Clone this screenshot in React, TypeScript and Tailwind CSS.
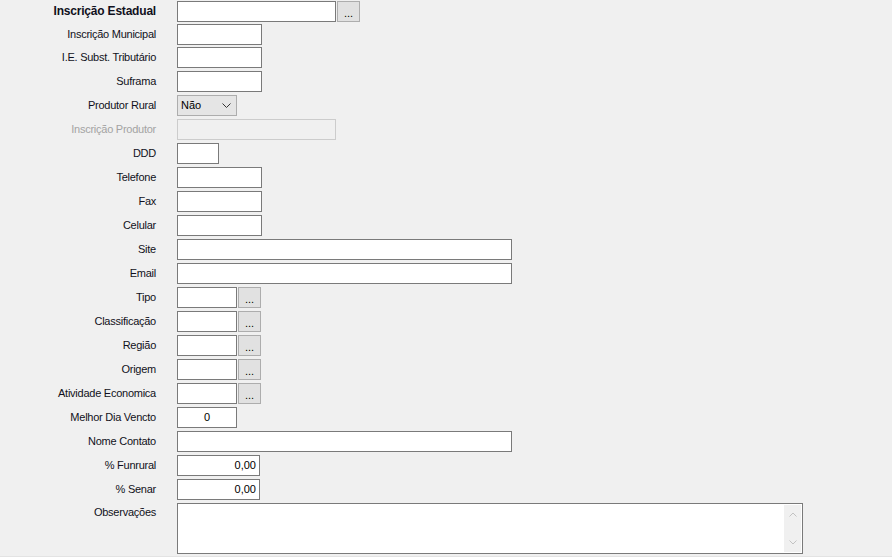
import { ReactNode } from "react";

const font = { fontFamily: '"Liberation Sans", Arial, sans-serif' };

function Label({ children, bold, disabled, top }: { children: ReactNode; bold?: boolean; disabled?: boolean; top?: boolean }) {
  return (
    <div
      className={`w-[156px] shrink-0 text-right leading-[13px] ${bold ? "font-bold text-[12px] tracking-[-0.2px]" : "text-[11px] tracking-[-0.25px]"} ${
        disabled ? "text-[#a3a3a3]" : "text-[#101020]"
      } ${top ? "self-start pt-[3px]" : ""}`}
    >
      {children}
    </div>
  );
}

function Input({ w, value, align = "left", disabled }: { w: string; value?: string; align?: "left" | "right" | "center"; disabled?: boolean }) {
  const al = align === "right" ? "justify-end pr-[3px]" : align === "center" ? "justify-center" : "justify-start pl-[3px]";
  return (
    <div
      className={`${w} h-[21px] flex items-center text-[11px] text-black border ${al} ${
        disabled ? "bg-[#f0f0f0] border-[#cccccc]" : "bg-white border-[#7a7a7a]"
      }`}
    >
      {value}
    </div>
  );
}

function Dots() {
  return (
    <div className="ml-[1px] w-[23px] h-[21px] bg-[#e1e1e1] border border-[#adadad] flex items-end justify-center pb-[3px] text-[11px] leading-[10px] text-black">
      ...
    </div>
  );
}

function Row({ label, h = "h-[24px]", children, bold, disabled }: { label: string; h?: string; children: ReactNode; bold?: boolean; disabled?: boolean }) {
  return (
    <div className={`flex items-start ${h}`}>
      <div className="h-[21px] flex items-center">
        <Label bold={bold} disabled={disabled}>{label}</Label>
      </div>
      <div className="ml-[21px] flex">{children}</div>
    </div>
  );
}

export default function App() {
  const lookups = ["Tipo", "Classificação", "Região", "Origem", "Atividade Economica"];
  return (
    <div className="w-[892px] h-[557px] bg-[#f0f0f0] overflow-hidden flex flex-col" style={font}>
      <div className="pt-[1px] flex flex-col">
        <Row label="Inscrição Estadual" bold h="h-[23px]">
          <Input w="w-[159px]" />
          <Dots />
        </Row>
        <Row label="Inscrição Municipal" h="h-[23px]">
          <Input w="w-[85px]" />
        </Row>
        <Row label="I.E. Subst. Tributário">
          <Input w="w-[85px]" />
        </Row>
        <Row label="Suframa">
          <Input w="w-[85px]" />
        </Row>
        <Row label="Produtor Rural">
          <div className="w-[60px] h-[21px] bg-[#e5e5e5] border border-[#adadad] flex items-center justify-between pl-[3px] pr-[5px] text-[11px] text-black">
            <span>Não</span>
            <svg width="9" height="5" viewBox="0 0 9 5" fill="none" stroke="#333" strokeWidth="1">
              <path d="M0.5 0.5 L4.5 4.5 L8.5 0.5" />
            </svg>
          </div>
        </Row>
        <Row label="Inscrição Produtor" disabled>
          <Input w="w-[159px]" disabled />
        </Row>
        <Row label="DDD">
          <Input w="w-[42px]" />
        </Row>
        <Row label="Telefone">
          <Input w="w-[85px]" />
        </Row>
        <Row label="Fax">
          <Input w="w-[85px]" />
        </Row>
        <Row label="Celular">
          <Input w="w-[85px]" />
        </Row>
        <Row label="Site">
          <Input w="w-[335px]" />
        </Row>
        <Row label="Email">
          <Input w="w-[335px]" />
        </Row>
        {lookups.map((l) => (
          <Row key={l} label={l}>
            <Input w="w-[60px]" />
            <Dots />
          </Row>
        ))}
        <Row label="Melhor Dia Vencto">
          <Input w="w-[60px]" value="0" align="center" />
        </Row>
        <Row label="Nome Contato">
          <Input w="w-[335px]" />
        </Row>
        <Row label="% Funrural">
          <Input w="w-[83px]" value="0,00" align="right" />
        </Row>
        <Row label="% Senar">
          <Input w="w-[83px]" value="0,00" align="right" />
        </Row>
        <div className="flex items-start h-[52px]">
          <Label top>Observações</Label>
          <div className="ml-[21px] w-[626px] h-[51px] bg-white border border-[#7a7a7a] flex justify-end p-[1px]">
            <div className="w-[17px] h-full bg-[#f0f0f0] flex flex-col items-center justify-between py-[7px]">
              <svg width="8" height="5" viewBox="0 0 8 5" fill="none" stroke="#c2c2c2" strokeWidth="1">
                <path d="M0.5 4.5 L4 1 L7.5 4.5" />
              </svg>
              <svg width="8" height="5" viewBox="0 0 8 5" fill="none" stroke="#c2c2c2" strokeWidth="1">
                <path d="M0.5 0.5 L4 4 L7.5 0.5" />
              </svg>
            </div>
          </div>
        </div>
      </div>
      <div className="mt-[1px] h-[1px] bg-[#e3e3e3]" />
    </div>
  );
}
